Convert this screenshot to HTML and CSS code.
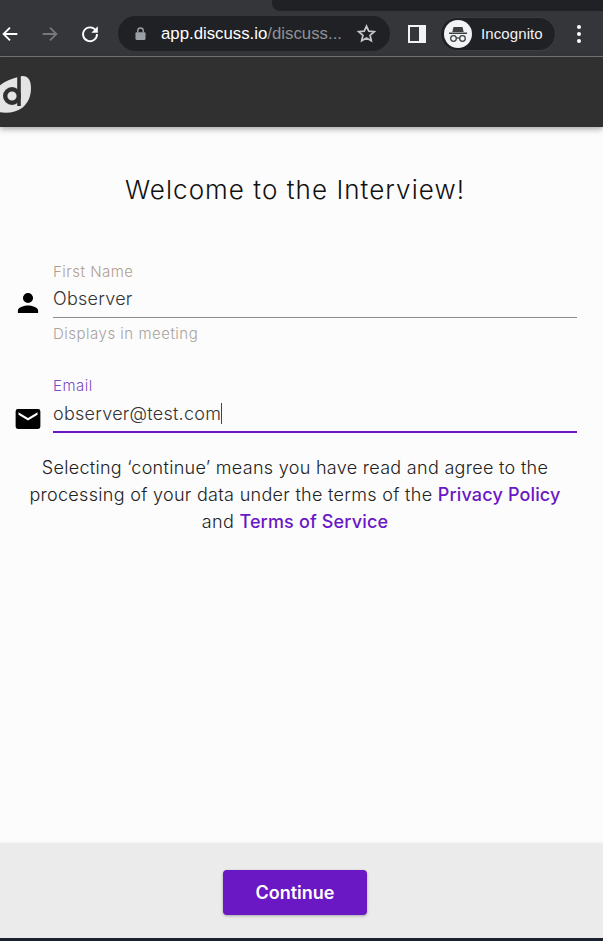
FILE: index.html
```html
<!DOCTYPE html>
<html lang="en">

<head>
    <meta charset="UTF-8">
    <title>Welcome to the Interview!</title>
    <link rel="stylesheet" href="styles.css">
</head>

<body>
    <div class="page">
        <div class="tabstrip">
            <div class="tab"></div>
        </div>

        <div class="toolbar">
            <svg class="nav back" viewBox="0 0 24 24"><path d="M20 12H5M12 5l-7 7 7 7" fill="none" stroke="#fff" stroke-width="2"/></svg>
            <svg class="nav forward" viewBox="0 0 24 24"><path d="M4 12h15M12 5l7 7-7 7" fill="none" stroke="#77787b" stroke-width="2"/></svg>
            <svg class="nav reload" viewBox="0 0 24 24"><path d="M18.4 8.2A7.6 7.6 0 1 0 19.600 12" fill="none" stroke="#fff" stroke-width="2"/><path d="M20.500 3.500v7h-7z" fill="#fff"/></svg>

            <div class="omnibox">
                <svg class="lock" viewBox="0 0 12 14"><path d="M3 6V4a3 3 0 0 1 6 0v2" fill="none" stroke="#9aa0a6" stroke-width="1.500"/><rect x="0.500" y="5.500" width="11" height="8.500" rx="1.200" fill="#9aa0a6"/></svg>
                <span class="url">app.discuss.io<span class="url-rest">/discuss...</span></span>
                <svg class="star" viewBox="0 0 24 24"><path d="M12 3.500l2.600 5.800 6.300.6-4.800 4.200 1.400 6.200L12 17.100l-5.500 3.200 1.400-6.200-4.800-4.200 6.300-.6z" fill="none" stroke="#c4c7c9" stroke-width="2"/></svg>
            </div>

            <svg class="panel" viewBox="0 0 18 18"><path fill-rule="evenodd" d="M0 0h18v18H0zM2 2v14h9V2z" fill="#f1f3f4"/></svg>

            <div class="profile">
                <span class="avatar">
                    <svg viewBox="0 0 28 28"><path d="M9.500 7h9l1.200 5H8.300z" fill="#3c4043"/><path d="M5 12.500h18V14H5z" fill="#3c4043"/><circle cx="9.500" cy="18.500" r="2.800" fill="none" stroke="#3c4043" stroke-width="1.300"/><circle cx="18.500" cy="18.500" r="2.800" fill="none" stroke="#3c4043" stroke-width="1.300"/><path d="M12.300 18h3.400" stroke="#3c4043" stroke-width="1.300"/></svg>
                </span>
                <span class="profile-name">Incognito</span>
            </div>

            <div class="menu"><i></i><i></i><i></i></div>
        </div>

        <header class="app-header">
            <svg class="logo" viewBox="0 0 31 38">
                <path d="M-8 22C-6 12 6 5 18 2 26-1 31 3 31 13c0 10-4 16-9 20-6 4-14 6-24 4z" fill="#e4e4e4"/>
                <circle cx="12" cy="21" r="6.800" fill="none" stroke="#303030" stroke-width="4.400"/>
                <path d="M19 -1V31" stroke="#303030" stroke-width="3.600"/>
            </svg>
        </header>

        <main class="content">
            <h1 class="title">Welcome to the Interview!</h1>

            <form class="form">
                <div class="field">
                    <svg class="field-icon person" viewBox="1.700 1.700 20.600 20.600"><path d="M12 12a4 4 0 1 0 0-8 4 4 0 0 0 0 8zm0 2c-2.700 0-8 1.300-8 4v2h16v-2c0-2.700-5.300-4-8-4z"/></svg>
                    <div class="field-body">
                        <label class="field-label">First Name</label>
                        <div class="field-value">Observer</div>
                        <div class="field-help">Displays in meeting</div>
                    </div>
                </div>

                <div class="field focused">
                    <svg class="field-icon mail" viewBox="0 0 26 21"><path fill-rule="evenodd" d="M2.500 0h21A2.500 2.500 0 0 1 26 2.500v16a2.500 2.500 0 0 1-2.500 2.500h-21A2.500 2.500 0 0 1 0 18.500v-16A2.500 2.500 0 0 1 2.500 0zM3 3.500V6l10 6 10-6V3.500l-10 6z"/></svg>
                    <div class="field-body">
                        <label class="field-label">Email</label>
                        <div class="field-value">observer@test.com<span class="caret"></span></div>
                    </div>
                </div>
            </form>

            <p class="terms">
                Selecting ‘continue’ means you have read and agree to the
                processing of your data under the terms of the <a href="#">Privacy Policy</a>
                and <a href="#">Terms of Service</a>
            </p>
        </main>

        <footer class="footer">
            <button class="continue" type="button">Continue</button>
        </footer>
    </div>
</body>

</html>
```

FILE: styles.css
```css
* {
    box-sizing: border-box;
}

html,
body {
    margin: 0;
    height: 100%;
}

body {
    font-family: "Inter", "Noto Sans", sans-serif;
    background: #fcfcfc;
    overflow: hidden;
}

.page {
    display: flex;
    flex-direction: column;
    height: 941px;
    border-bottom: 3px solid #1c2330;
}

/* browser chrome */

.tabstrip {
    height: 11px;
    background: #35363a;
    padding-left: 272px;
}

.tab {
    height: 11px;
    background: #202124;
    border-bottom-left-radius: 8px;
}

.toolbar {
    height: 46px;
    flex: none;
    display: flex;
    align-items: center;
    background: #35363a;
    border-bottom: 1px solid #77787a;
}

.nav {
    width: 22px;
    height: 22px;
    flex: none;
}

.back {
    margin-left: -1px;
}

.forward {
    margin-left: 18px;
}

.reload {
    margin-left: 18px;
}

.omnibox {
    width: 272px;
    height: 35px;
    margin-left: 17px;
    flex: none;
    display: flex;
    align-items: center;
    padding: 0 13px 0 17px;
    background: #202124;
    border-radius: 18px;
}

.lock {
    width: 11px;
    height: 13px;
    flex: none;
}

.url {
    margin-left: 15px;
    font-family: "Liberation Sans", sans-serif;
    font-size: 16.800px;
    color: #fff;
    white-space: nowrap;
    flex: 1;
}

.url-rest {
    color: #8f9296;
}

.star {
    width: 21px;
    height: 21px;
    flex: none;
}

.panel {
    width: 18px;
    height: 18px;
    margin-left: 18px;
    flex: none;
}

.profile {
    width: 116px;
    height: 34px;
    margin-left: 14px;
    flex: none;
    display: flex;
    align-items: center;
    padding-left: 3px;
    background: #202124;
    border: 1px solid #3c3d41;
    border-radius: 17px;
}

.avatar {
    width: 28px;
    height: 28px;
    flex: none;
    border-radius: 50%;
    background: #f1f3f4;
}

.avatar svg {
    display: block;
    width: 28px;
    height: 28px;
}

.profile-name {
    margin-left: 9px;
    font-family: "Liberation Sans", sans-serif;
    font-size: 15px;
    letter-spacing: 0.100px;
    color: #f1f3f4;
}

.menu {
    margin-left: 21px;
    display: flex;
    flex-direction: column;
    gap: 3px;
}

.menu i {
    display: block;
    width: 4px;
    height: 4px;
    border-radius: 50%;
    background: #fff;
}

/* app */

.app-header {
    height: 70px;
    flex: none;
    display: flex;
    align-items: flex-start;
    padding-top: 18px;
    background: #303030;
    box-shadow: 0 2px 6px rgba(0, 0, 0, 0.35);
    position: relative;
}

.logo {
    width: 31px;
    height: 38px;
    display: block;
    overflow: hidden;
}

.content {
    flex: 1;
    padding: 47px 26px 0 15px;
}

.title {
    margin: 0 2px 0 0;
    font-size: 26px;
    line-height: 32px;
    font-weight: 300;
    letter-spacing: 1.050px;
    color: #111;
    text-align: center;
}

.form {
    margin-top: 57px;
}

.field {
    display: flex;
    align-items: flex-start;
    margin-bottom: 34px;
}

.field-icon {
    width: 26px;
    flex: none;
    margin-right: 12px;
}

.person {
    height: 26px;
    margin-top: 27px;
}

.mail {
    height: 20px;
    margin-top: 32px;
}

.field-body {
    flex: 1;
}

.field-label {
    display: block;
    font-size: 15px;
    line-height: 18px;
    font-weight: 300;
    letter-spacing: 0.500px;
    color: #b09f8f;
}

.field-value {
    height: 37px;
    padding-top: 7px;
    font-size: 18px;
    line-height: 22px;
    font-weight: 300;
    letter-spacing: 0.250px;
    color: #333;
    border-bottom: 1px solid #8c8c8c;
    white-space: nowrap;
    display: flex;
}

.field-help {
    margin-top: 7px;
    font-size: 15px;
    line-height: 18px;
    font-weight: 300;
    letter-spacing: 0.500px;
    color: #a9a49c;
}

.focused {
    margin-bottom: 0;
}

.focused .field-label {
    color: #7a4cc4;
}

.focused .field-value {
    height: 38px;
    padding-top: 8px;
    border-bottom: 2px solid #6a17c4;
}

.caret {
    width: 1px;
    height: 21px;
    background: #6a17c4;
}

.terms {
    margin: 21px 2px 0 0;
    font-size: 18px;
    line-height: 27px;
    font-weight: 300;
    letter-spacing: 0.300px;
    color: #222;
    text-align: center;
}

.terms a {
    color: #6a17c4;
    font-weight: 500;
    letter-spacing: 0.150px;
    text-decoration: none;
}

.footer {
    height: 95px;
    flex: none;
    display: flex;
    align-items: center;
    justify-content: center;
    padding: 4px 13px 0 0;
    background: #ebebeb;
    box-shadow: 0 -1px 4px rgba(0, 0, 0, 0.04);
}

.continue {
    width: 144px;
    height: 45px;
    flex: none;
    font-family: inherit;
    font-size: 18px;
    font-weight: 600;
    color: #fff;
    background: #6a17c4;
    border: 0;
    border-radius: 4px;
    box-shadow: 0 1px 3px rgba(0, 0, 0, 0.3);
}
```
